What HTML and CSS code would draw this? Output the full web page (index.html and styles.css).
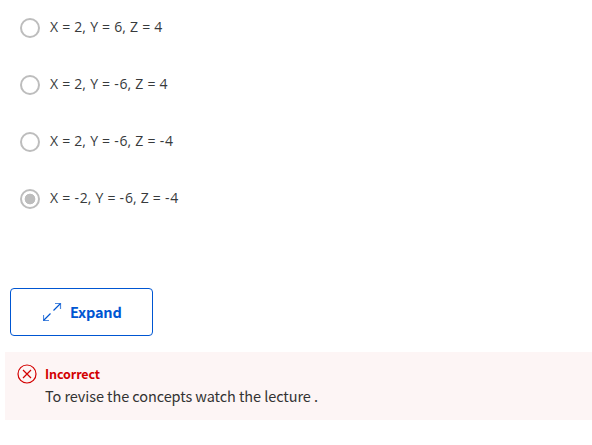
FILE: index.html
```html
<!DOCTYPE html>
<html lang="en">
<head>
<meta charset="utf-8">
<title>Quiz</title>
<link rel="stylesheet" href="styles.css">
</head>
<body>
<main class="quiz">
  <div class="options">
    <div class="option"><span class="radio"></span><span class="label">X = 2, Y = 6, Z = 4</span></div>
    <div class="option"><span class="radio"></span><span class="label">X = 2, Y = <span class="minus">-</span>6, Z = 4</span></div>
    <div class="option"><span class="radio"></span><span class="label">X = 2, Y = <span class="minus">-</span>6, Z = <span class="minus">-</span>4</span></div>
    <div class="option"><span class="radio checked"></span><span class="label">X = <span class="minus">-</span>2, Y = <span class="minus">-</span>6, Z = <span class="minus">-</span>4</span></div>
  </div>
  <button class="expand" type="button">
    <svg class="expand-icon" width="20" height="20" viewBox="0 0 20 20"><path class="head" d="M12 1.500h5.500V7M.5 13v5.500H6"/><path d="M17.500 1.500L10.500 8.500M.5 18.500L7.500 11.500"/></svg>
    <span>Expand</span>
  </button>
  <section class="feedback">
    <svg class="error-icon" width="20" height="20" viewBox="0 0 20 20"><circle cx="10" cy="10" r="9"/><path d="M6 6l8 8M14 6l-8 8"/></svg>
    <div>
      <h3 class="title">Incorrect</h3>
      <p class="message">To revise the concepts watch the lecture .</p>
    </div>
  </section>
</main>
</body>
</html>
```
FILE: styles.css
```css
* { box-sizing: border-box; }
body { margin: 0; background: #fff; font-family: "Noto Sans CJK SC", sans-serif; color: #373a3c; }
.quiz { padding-top: 17px; }
.options { display: flex; flex-direction: column; gap: 35px; padding-left: 20px; }
.option { display: flex; height: 22px; align-items: center; gap: 10px; }
.radio { width: 20px; height: 20px; border: 2px solid #bdbdbd; border-radius: 50%; }
.checked { background: radial-gradient(circle, #bdbdbd 5px, #fff 5.700px); }
.label { font: 400 14px/20px "Open Sans", sans-serif; color: #373a3c; word-spacing: 0.5px; padding-bottom: 2px; }
.minus { letter-spacing: 0.8px; }
.expand { display: flex; align-items: center; gap: 7px; width: 143px; height: 48px; margin: 78px 0 16px 10px; padding: 0 0 0 32px; border: 1px solid #0056d2; border-radius: 4px; background: #fff; color: #0056d2; font: 700 14.5px/20px "Noto Sans CJK SC", sans-serif; letter-spacing: -0.2px; }
.expand-icon, .error-icon { fill: none; stroke: currentColor; stroke-width: 1.2; flex: none; }
.head { stroke-opacity: 0.7; }
.feedback { display: flex; gap: 8px; margin-left: 5px; padding: 12px; height: 68px; background: #fdf5f5; color: #d30001; }
.title { margin: 0; font-size: 12.500px; line-height: 20px; letter-spacing: -0.1px; }
.message { margin: 1px 0 0; font-size: 14.500px; line-height: 21px; letter-spacing: -0.08px; color: #333; }
```
